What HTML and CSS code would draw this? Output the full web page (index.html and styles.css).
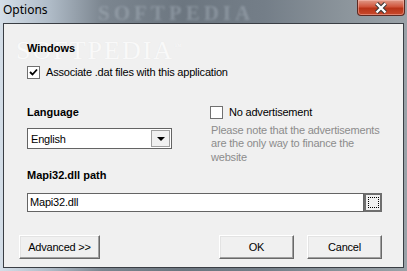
FILE: index.html
```html
<!DOCTYPE html>
<html lang="en">
<head>
    <meta charset="UTF-8">
    <title>Options</title>
    <link rel="stylesheet" href="styles.css">
</head>
<body>
    <div class="window">
        <div class="titlebar">
            <span class="title">Options</span>
            <span class="title-mark">SOFTPEDIA</span>
            <button class="close-btn" aria-label="Close">
                <svg width="16" height="12" viewBox="0 0 16 12">
                    <path d="M3.5 1.5 L12.5 10.5 M12.5 1.5 L3.5 10.5" stroke="#3a3a3a" stroke-width="4.4" fill="none"/>
                    <path d="M3.5 1.5 L12.5 10.5 M12.5 1.5 L3.5 10.5" stroke="#fff" stroke-width="2.4" fill="none"/>
                </svg>
            </button>
        </div>

        <div class="client">
            <span class="client-mark">SOFTPEDIA<sup>™</sup></span>

            <div class="group-title">Windows</div>
            <label class="check-row assoc">
                <span class="checkbox">
                    <svg width="9" height="9" viewBox="0 0 9 9"><path d="M1 4 L3.5 6.5 L8 1.5" stroke="#000" stroke-width="1.8" fill="none"/></svg>
                </span>
                Associate .dat files with this application
            </label>

            <div class="columns">
                <div class="col-left">
                    <div class="group-title">Language</div>
                    <div class="combo">
                        <span class="combo-value">English</span>
                        <span class="combo-btn"><span class="arrow"></span></span>
                    </div>
                </div>
                <div class="col-right">
                    <label class="check-row">
                        <span class="checkbox"></span>
                        No advertisement
                    </label>
                    <p class="note">Please note that the advertisements are the only way to finance the website</p>
                </div>
            </div>

            <div class="group-title">Mapi32.dll path</div>
            <div class="path-row">
                <div class="path-input">Mapi32.dll</div>
                <button class="browse-btn"><span class="focus-rect"></span></button>
            </div>

            <div class="button-row">
                <button class="btn wide">Advanced &gt;&gt;</button>
                <div class="btn-group">
                    <button class="btn">OK</button>
                    <button class="btn">Cancel</button>
                </div>
            </div>
        </div>
    </div>
</body>
</html>
```

FILE: styles.css
```css
body {
    margin: 0;
    width: 407px;
    height: 271px;
    overflow: hidden;
    font-family: 'Liberation Sans', Arial, sans-serif;
    font-size: 11px;
    letter-spacing: -0.2px;
    color: #000;
    background: linear-gradient(90deg, #d4dee8 0%, #b0bcc8 12%, #7c8690 25%, #6c7680 45%, #747e88 65%, #8c959c 85%, #9aa2a8 100%);
}
.window {
    display: flex;
    flex-direction: column;
    height: 271px;
}
.titlebar {
    position: relative;
    height: 23px;
    display: flex;
    justify-content: space-between;
    align-items: flex-start;
    flex-shrink: 0;
}
.title {
    font-family: 'Noto Sans', sans-serif;
    font-size: 12px;
    letter-spacing: 0;
    line-height: 16px;
    padding: 2px 0 0 3px;
}
.title-mark {
    position: absolute;
    left: 98px;
    top: 1px;
    font-family: 'Liberation Serif', serif;
    font-weight: bold;
    font-size: 21px;
    line-height: 24px;
    letter-spacing: 4px;
    color: rgba(200, 210, 220, 0.3);
    filter: blur(1.2px);
}
.close-btn {
    width: 48px;
    height: 16px;
    margin-right: 2px;
    padding: 0;
    border: 1px solid #5c2a22;
    border-top: none;
    border-radius: 0 0 4px 4px;
    background: linear-gradient(180deg, #e09a88 0%, #d0553c 45%, #b83418 55%, #c84a2c 100%);
    box-shadow: inset 0 0 0 1px rgba(255, 200, 190, 0.45);
    display: flex;
    align-items: center;
    justify-content: center;
}
.client {
    position: relative;
    flex: 1;
    margin: 0 3px 3px 3px;
    border: 1px solid #3a3e44;
    background: #f0f0f0;
    padding: 18px 20px 0 23px;
}
.client-mark {
    position: absolute;
    left: 12px;
    top: 12px;
    font-family: 'Liberation Serif', serif;
    font-size: 26px;
    letter-spacing: 2px;
    color: #f9f9f9;
    text-shadow: 0 0 1px #e6e6e6;
}
.client-mark sup {
    font-size: 8px;
}
.group-title {
    position: relative;
    font-weight: bold;
    letter-spacing: 0;
    line-height: 13px;
}
.check-row {
    position: relative;
    display: flex;
    align-items: center;
    gap: 6px;
    line-height: 13px;
}
.assoc {
    margin-top: 11px;
}
.checkbox {
    width: 11px;
    height: 11px;
    border: 1px solid #707070;
    background: #fff;
    display: flex;
    align-items: center;
    justify-content: center;
    flex-shrink: 0;
}
.columns {
    display: flex;
    height: 63px;
    margin-top: 27px;
}
.col-left {
    width: 192px;
}
.combo {
    margin-top: 9px;
    width: 143px;
    height: 19px;
    border: 1px solid #646464;
    background: #fff;
    display: flex;
    align-items: center;
    justify-content: space-between;
}
.combo-value {
    padding-left: 3px;
}
.combo-btn {
    width: 17px;
    height: 15px;
    margin-right: 1px;
    border: 1px solid #a0a0a0;
    background: #f0f0f0;
    display: flex;
    align-items: center;
    justify-content: center;
}
.arrow {
    width: 0;
    height: 0;
    border-left: 4px solid transparent;
    border-right: 4px solid transparent;
    border-top: 4px solid #000;
}
.note {
    margin: 5px 0 0 1px;
    color: #8c8c8c;
    line-height: 13.3px;
    width: 172px;
}
.path-row {
    display: flex;
    margin-top: 11px;
    width: 355px;
}
.path-input {
    flex: 1;
    height: 17px;
    border: 1px solid #646464;
    background: #fff;
    line-height: 17px;
    padding-left: 2px;
}
.browse-btn {
    width: 18px;
    height: 19px;
    padding: 0;
    border: 2px solid #6e6e6e;
    background: #f0f0f0;
    display: flex;
    align-items: center;
    justify-content: center;
}
.focus-rect {
    width: 9px;
    height: 9px;
    border: 1px dotted #000;
}
.button-row {
    display: flex;
    justify-content: space-between;
    margin-top: 23px;
    margin-left: -8px;
    width: 363px;
}
.btn-group {
    display: flex;
    gap: 13px;
}
.btn {
    width: 75px;
    height: 24px;
    padding: 0;
    font-family: 'Liberation Sans', Arial, sans-serif;
    font-size: 11px;
    letter-spacing: -0.2px;
    color: #000;
    background: #f0f0f0;
    border: 1px solid;
    border-color: #ffffff #696969 #696969 #ffffff;
    box-shadow: inset -1px -1px 0 #a0a0a0, inset 1px 1px 0 #e3e3e3;
}
.btn.wide {
    width: 81px;
}
```
